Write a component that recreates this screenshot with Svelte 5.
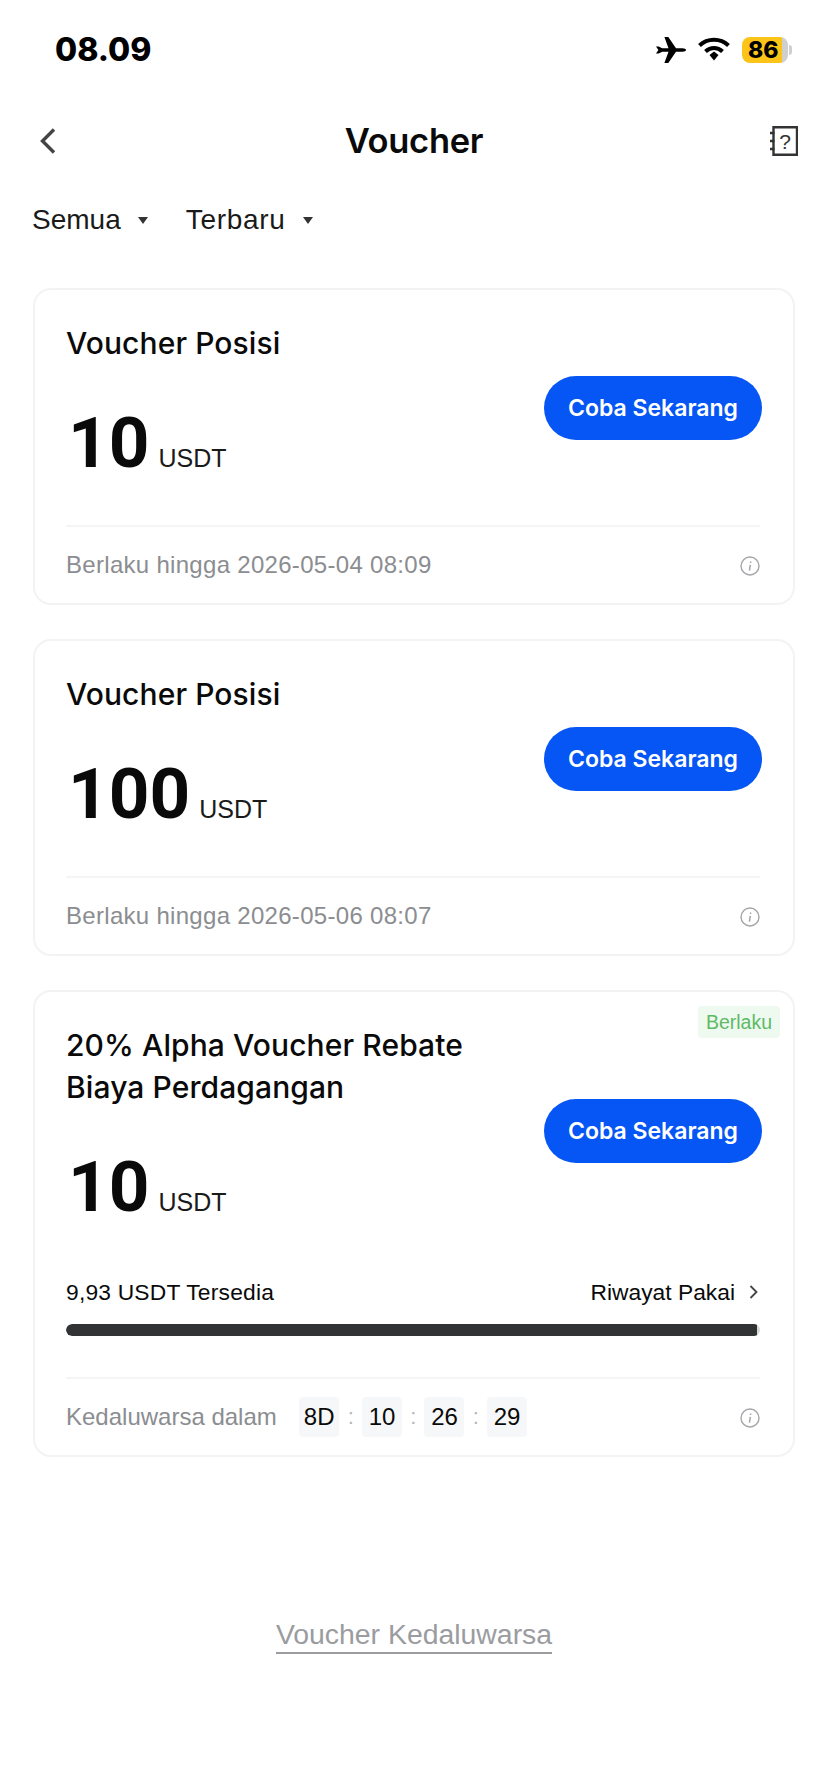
<script>
	const vouchers = [
		{ title: 'Voucher Posisi', amount: '10', until: 'Berlaku hingga 2026-05-04 08:09' },
		{ title: 'Voucher Posisi', amount: '100', until: 'Berlaku hingga 2026-05-06 08:07' }
	];
	const countdown = ['8D', '10', '26', '29'];
</script>

{#snippet infoIcon()}
	<svg class="info" viewBox="0 0 20 20" fill="none">
		<circle cx="10" cy="10" r="9" stroke="#a3a5a8" stroke-width="1.4" />
		<path d="M10.6 5.6v1.4M10.3 8.8 9.4 14.6" stroke="#a3a5a8" stroke-width="1.5" />
	</svg>
{/snippet}

{#snippet action()}
	<button class="cta">Coba Sekarang</button>
{/snippet}

{#snippet amount(value)}
	<div class="amount">
		<span class="amount__value">{value}</span>
		<span class="amount__unit">USDT</span>
	</div>
{/snippet}

<div class="page">
	<!-- Status bar -->
	<div class="status">
		<span class="status__time">08.09</span>
		<div class="status__icons">
			<svg class="plane" viewBox="0 0 30 26">
				<path d="M0 9.500 2.400 13 0 16.500H2.600L6.300 14.700H12.500L8.400 26H12.300L20 14.700H26.500C28.500 14.700 30 14 30 13S28.500 11.300 26.500 11.300H20L12.300 0H8.400L12.500 11.300H6.300L2.600 9.500Z" fill="#000" />
			</svg>
			<svg class="wifi" viewBox="0 0 32 24" fill="none">
				<path d="M1.500 8.500C9.500 .8 22.500 .8 30.500 8.500" stroke="#000" stroke-width="4" />
				<path d="M7.500 14.500C12.500 9.800 19.500 9.800 24.500 14.500" stroke="#000" stroke-width="4" />
				<path d="M11.500 18 16 14.600 20.500 18 16 23.500Z" fill="#000" />
			</svg>
			<div class="battery">
				<div class="battery__fill">86</div>
				<div class="battery__cap"></div>
			</div>
		</div>
	</div>

	<!-- Header -->
	<header class="nav">
		<svg class="nav__back" viewBox="0 0 18 28" fill="none">
			<path d="M15 2.500 3.500 14 15 25.500" stroke="#444" stroke-width="3.400" />
		</svg>
		<h1 class="nav__title">Voucher</h1>
		<svg class="nav__help" viewBox="0 0 28 30" fill="none">
			<path d="M3.500 1.200H27V28.800H3.500Z" stroke="#333" stroke-width="2.400" />
			<path d="M0 7H4.500M0 15H4.500M0 23H4.500" stroke="#333" stroke-width="2.400" />
			<text x="15.200" y="22.500" text-anchor="middle" class="nav__help-mark">?</text>
		</svg>
	</header>

	<!-- Filters -->
	<div class="filters">
		<div class="filter">Semua <span class="caret"></span></div>
		<div class="filter filter--wide">Terbaru <span class="caret"></span></div>
	</div>

	<div class="list">
		{#each vouchers as v}
			<section class="card">
				<div class="card__body">
					<div class="card__main">
						<h2 class="card__title">{v.title}</h2>
						{@render amount(v.amount)}
					</div>
					{@render action()}
				</div>
				<div class="card__foot">
					<span class="muted muted--date">{v.until}</span>
					{@render infoIcon()}
				</div>
			</section>
		{/each}

		<section class="card">
			<span class="badge">Berlaku</span>
			<div class="card__body card__body--alpha">
				<div class="card__main">
					<h2 class="card__title">20% Alpha Voucher Rebate<br />Biaya Perdagangan</h2>
					{@render amount('10')}
				</div>
				{@render action()}
			</div>
			<div class="usage">
				<div class="usage__row">
					<span class="usage__left">9,93 USDT Tersedia</span>
					<span class="usage__link">
						Riwayat Pakai
						<svg viewBox="0 0 10 16" fill="none"><path d="M1.500 2 7.500 8 1.500 14" stroke="#444" stroke-width="1.800" /></svg>
					</span>
				</div>
				<div class="bar"><div class="bar__fill" style="width: 99.5%"></div></div>
			</div>
			<div class="card__foot">
				<div class="timer">
					<span class="muted">Kedaluwarsa dalam</span>
					<div class="timer__cells">
						{#each countdown as c, i}
							{#if i > 0}<span class="timer__sep">:</span>{/if}
							<span class="timer__cell">{c}</span>
						{/each}
					</div>
				</div>
				{@render infoIcon()}
			</div>
		</section>
	</div>

	<div class="expired"><span>Voucher Kedaluwarsa</span></div>
</div>

<style>
	:global(body) {
		margin: 0;
		background: #fff;
	}

	.page {
		width: 828px;
		height: 1792px;
		overflow: hidden;
		font-family: "Liberation Sans", Arial, sans-serif;
		color: #0a0a0a;
		background: #fff;
	}

	/* Status bar */
	.status {
		height: 118px;
		box-sizing: border-box;
		padding: 30px 36px 0 55px;
		display: flex;
		justify-content: space-between;
		align-items: flex-start;
	}

	.status__time {
		font-family: Inter, sans-serif;
		font-size: 32px;
		line-height: 40px;
		font-weight: 800;
		color: #000;
	}

	.status__icons {
		display: flex;
		align-items: center;
		height: 40px;
	}

	.plane {
		width: 30px;
		height: 26px;
		margin-right: 12px;
	}

	.wifi {
		width: 32px;
		height: 24px;
		margin-right: 12px;
		margin-top: -3px;
	}

	.battery {
		display: flex;
		align-items: center;
		margin-top: -1px;
	}

	.battery__fill {
		width: 46px;
		height: 26px;
		border-radius: 8px;
		background: linear-gradient(90deg, #fcc419 0 87%, #cfcfcf 87%);
		font-family: Inter, sans-serif;
		font-size: 23px;
		line-height: 26px;
		font-weight: 800;
		text-indent: 6px;
		color: #000;
	}

	.battery__cap {
		width: 3px;
		height: 10px;
		margin-left: 1px;
		border-radius: 0 3px 3px 0;
		background: #cfcfcf;
	}

	/* Header */
	.nav {
		height: 46px;
		padding: 0 30px 0 39px;
		display: flex;
		align-items: center;
		justify-content: space-between;
		position: relative;
	}

	.nav__back {
		width: 18px;
		height: 28px;
	}

	.nav__title {
		position: absolute;
		left: 0;
		right: 0;
		margin: 0;
		text-align: center;
		font-family: Inter, sans-serif;
		font-size: 34.500px;
		font-weight: 600;
		line-height: 46px;
		letter-spacing: -0.3px;
	}

	.nav__help {
		width: 28px;
		height: 30px;
	}

	.nav__help-mark {
		font-size: 21px;
		fill: #333;
	}

	/* Filters */
	.filters {
		display: flex;
		gap: 38px;
		padding: 0 32px;
		margin-top: 36px;
		height: 40px;
		align-items: center;
	}

	.filter {
		display: flex;
		align-items: center;
		gap: 17px;
		font-size: 28px;
		color: #1a1a1a;
	}

	.filter--wide {
		letter-spacing: 0.7px;
	}

	.caret {
		width: 0;
		height: 0;
		border-left: 5px solid transparent;
		border-right: 5px solid transparent;
		border-top: 7px solid #333;
	}

	/* Cards */
	.list {
		margin: 48px 33px 0 33px;
		display: flex;
		flex-direction: column;
		gap: 34px;
	}

	.card {
		position: relative;
		padding: 0 33px 0 31px;
		border: 2px solid #f3f3f3;
		border-radius: 18px;
		background: #fff;
	}

	.card__body {
		height: 235px;
		display: flex;
		align-items: center;
		justify-content: space-between;
	}

	.card__body--alpha {
		height: 278px;
	}

	.card__main {
		align-self: flex-start;
		padding-top: 32px;
		display: flex;
		flex-direction: column;
	}

	.card__title {
		margin: 0;
		font-family: Inter, sans-serif;
		font-size: 30px;
		line-height: 42px;
		font-weight: 500;
		letter-spacing: 0.1px;
	}

	.amount {
		display: flex;
		align-items: baseline;
		margin-top: 41px;
	}

	.amount__value {
		font-family: Roboto, "Liberation Sans", sans-serif;
		font-size: 71px;
		line-height: 76px;
		font-weight: 700;
		margin-left: 2px;
	}

	.amount__unit {
		font-size: 25px;
		margin-left: 9px;
		color: #1a1a1a;
	}

	.cta {
		width: 218px;
		height: 64px;
		margin-right: -2px;
		border: none;
		border-radius: 32px;
		background: #0556f5;
		color: #fff;
		font-family: Inter, sans-serif;
		font-size: 23px;
		font-weight: 600;
	}

	.card__foot {
		height: 76px;
		border-top: 2px solid #f5f5f5;
		display: flex;
		align-items: center;
		justify-content: space-between;
	}

	.muted {
		font-size: 24px;
		color: #8b8d91;
	}

	.muted--date {
		letter-spacing: 0.3px;
	}

	.info {
		width: 20px;
		height: 20px;
		margin-top: 2px;
	}

	.badge {
		position: absolute;
		top: 14px;
		right: 13px;
		height: 32px;
		padding: 0 8px;
		line-height: 32px;
		border-radius: 4px;
		background: #eef9ef;
		color: #5fba67;
		font-size: 19.500px;
	}

	/* Usage */
	.usage {
		margin-top: 7px;
		padding-bottom: 41px;
	}

	.usage__row {
		display: flex;
		align-items: center;
		justify-content: space-between;
		font-size: 22.800px;
		line-height: 30px;
		margin-bottom: 17px;
	}

	.usage__left {
		letter-spacing: 0.2px;
	}

	.usage__link {
		display: flex;
		align-items: center;
		gap: 14px;
	}

	.usage__link svg {
		width: 10px;
		height: 16px;
		margin-right: 1px;
	}

	.bar {
		height: 12px;
		border-radius: 6px;
		background: #d8d8d8;
		overflow: hidden;
	}

	.bar__fill {
		height: 100%;
		background: #323335;
		border-radius: 6px 0 0 6px;
	}

	.timer {
		display: flex;
		align-items: center;
		gap: 22px;
	}

	.timer__cells {
		display: flex;
		align-items: center;
	}

	.timer__cell {
		height: 40px;
		min-width: 40px;
		box-sizing: border-box;
		padding: 0 5px;
		text-align: center;
		line-height: 40px;
		border-radius: 4px;
		background: #f6f7f8;
		font-size: 24px;
	}

	.timer__sep {
		width: 22.500px;
		text-align: center;
		font-size: 22px;
		color: #b5b7ba;
	}

	.expired {
		margin-top: 160px;
		text-align: center;
	}

	.expired span {
		display: inline-block;
		font-size: 28.400px;
		line-height: 34px;
		color: #9a9c9f;
		border-bottom: 2px solid #9a9c9f;
		padding-bottom: 1px;
	}
</style>
